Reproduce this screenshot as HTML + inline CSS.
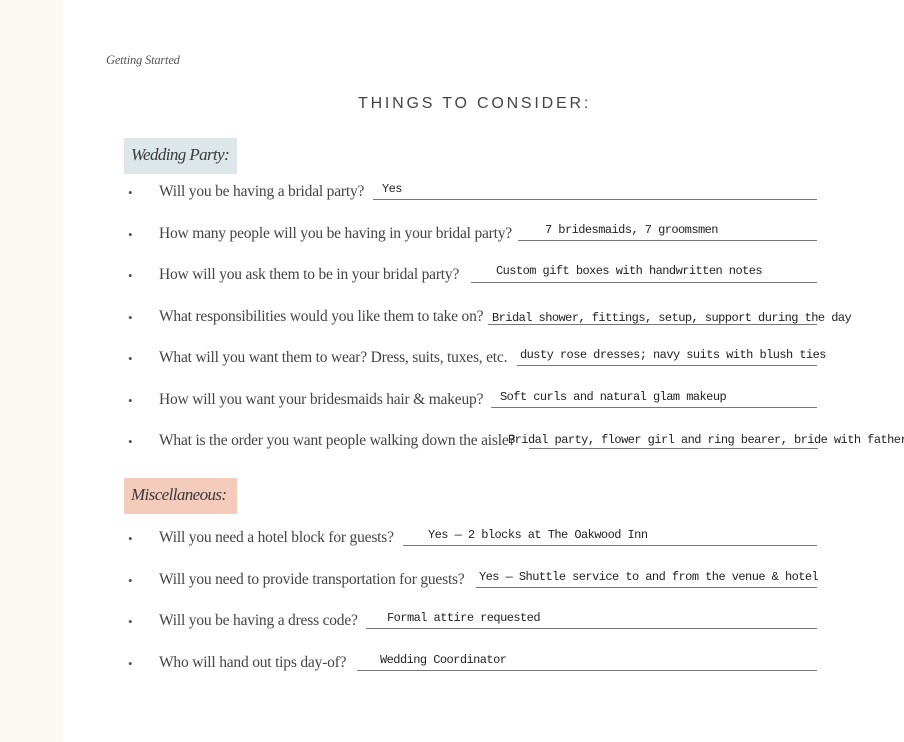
<!DOCTYPE html>
<html><head><meta charset="utf-8"><style>
body{margin:0;width:904px;height:742px;background:#fff;position:relative;overflow:hidden;font-family:"Liberation Serif",serif;color:#333}
.strip{position:absolute;left:0;top:0;width:63px;height:742px;background:#fcf8f2}
.a{position:absolute;white-space:nowrap}
.q{font-size:15.5px;letter-spacing:-0.2px;color:#444}
.b{font-size:13px;color:#555}
.ans{font-family:"Liberation Mono",monospace;font-size:12px;color:#222;letter-spacing:-0.55px}
.ln{position:absolute;height:1px;background:#777}
.box{position:absolute;left:124px;width:113px;height:36px}
.bt{font-style:italic;font-size:17px;letter-spacing:-0.6px;color:#3a3a3a;position:absolute;left:7px;top:7px}
</style></head><body>
<div class="strip"></div>
<div class="a" style="left:106px;top:53px;font-style:italic;font-size:12.5px;letter-spacing:-0.2px;color:#555">Getting Started</div>
<div class="a" style="left:358px;top:95px;font-family:'Liberation Sans',sans-serif;font-size:16px;letter-spacing:2.8px;color:#444">THINGS TO CONSIDER:</div>
<div class="box" style="top:138px;background:#dde6e8"><span class="bt">Wedding Party:</span></div>
<div class="box" style="top:478px;background:#f2cbbb"><span class="bt">Miscellaneous:</span></div>

<div class="a b" style="left:128px;top:185px">•</div><div class="a q" style="left:159px;top:183px">Will you be having a bridal party?</div><div class="ln" style="left:373px;width:444px;top:199px"></div><div class="a ans" style="left:382px;top:182px">Yes</div>

<div class="a b" style="left:128px;top:227px">•</div><div class="a q" style="left:159px;top:225px">How many people will you be having in your bridal party?</div><div class="ln" style="left:518px;width:299px;top:240px"></div><div class="a ans" style="left:545px;top:223px">7 bridesmaids, 7 groomsmen</div>

<div class="a b" style="left:128px;top:268px">•</div><div class="a q" style="left:159px;top:266px">How will you ask them to be in your bridal party?</div><div class="ln" style="left:471px;width:346px;top:282px"></div><div class="a ans" style="left:496px;top:264px">Custom gift boxes with handwritten notes</div>

<div class="a b" style="left:128px;top:310px">•</div><div class="a q" style="left:159px;top:308px">What responsibilities would you like them to take on?</div><div class="ln" style="left:488px;width:329px;top:324px"></div><div class="a ans" style="left:492px;top:311px">Bridal shower, fittings, setup, support during the day</div>

<div class="a b" style="left:128px;top:351px">•</div><div class="a q" style="left:159px;top:349px">What will you want them to wear? Dress, suits, tuxes, etc.</div><div class="ln" style="left:517px;width:300px;top:365px"></div><div class="a ans" style="left:520px;top:348px">dusty rose dresses; navy suits with blush ties</div>

<div class="a b" style="left:128px;top:393px">•</div><div class="a q" style="left:159px;top:391px">How will you want your bridesmaids hair &amp; makeup?</div><div class="ln" style="left:491px;width:326px;top:407px"></div><div class="a ans" style="left:500px;top:390px">Soft curls and natural glam makeup</div>

<div class="a b" style="left:128px;top:434px">•</div><div class="a q" style="left:159px;top:432px">What is the order you want people walking down the aisle?</div><div class="ln" style="left:529px;width:289px;top:448px"></div><div class="a ans" style="left:508px;top:433px">Bridal party, flower girl and ring bearer, bride with father</div>

<div class="a b" style="left:128px;top:531px">•</div><div class="a q" style="left:159px;top:529px">Will you need a hotel block for guests?</div><div class="ln" style="left:403px;width:414px;top:545px"></div><div class="a ans" style="left:428px;top:528px">Yes — 2 blocks at The Oakwood Inn</div>

<div class="a b" style="left:128px;top:573px">•</div><div class="a q" style="left:159px;top:571px">Will you need to provide transportation for guests?</div><div class="ln" style="left:476px;width:341px;top:587px"></div><div class="a ans" style="left:479px;top:570px">Yes — Shuttle service to and from the venue &amp; hotel</div>

<div class="a b" style="left:128px;top:614px">•</div><div class="a q" style="left:159px;top:612px">Will you be having a dress code?</div><div class="ln" style="left:366px;width:451px;top:628px"></div><div class="a ans" style="left:387px;top:611px">Formal attire requested</div>

<div class="a b" style="left:128px;top:656px">•</div><div class="a q" style="left:159px;top:654px">Who will hand out tips day-of?</div><div class="ln" style="left:357px;width:460px;top:670px"></div><div class="a ans" style="left:380px;top:653px">Wedding Coordinator</div>
</body></html>
